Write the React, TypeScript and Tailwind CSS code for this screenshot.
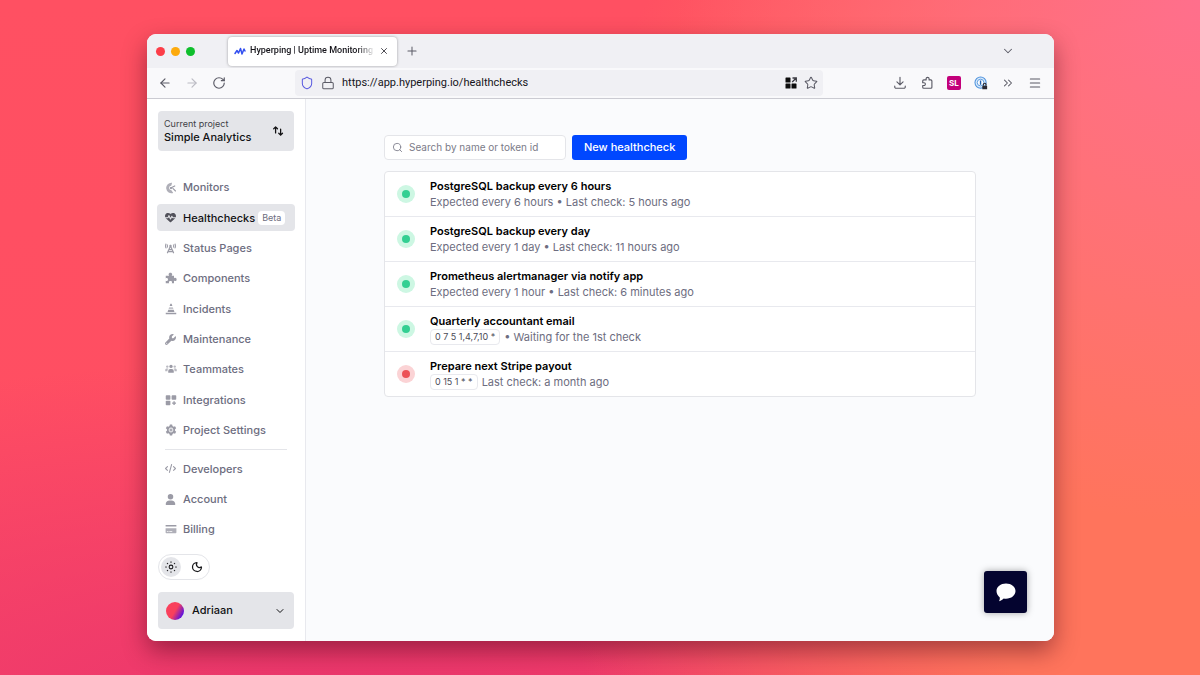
import type { ReactNode } from "react";
import {
  ArrowLeft,
  ArrowRight,
  ChevronDown,
  ChevronsRight,
  Lock,
  Menu,
  Moon,
  Plus,
  RotateCw,
  Search,
  Shield,
  Star,
  X,
} from "lucide-react";
import { FaCode, FaHeartPulse, FaTowerCell, FaUser, FaWrench } from "react-icons/fa6";

type NavItem = {
  label: string;
  icon: ReactNode;
  active?: boolean;
  badge?: string;
};

type Healthcheck = {
  name: string;
  cron?: string;
  detail: string;
  status: "up" | "down";
};

function RadarIcon() {
  return (
    <svg viewBox="0 0 16 16" className="size-3" fill="none">
      <path d="M9.500 1A7 7 0 1 0 11 14.500L8.600 11A3 3 0 0 1 8.300 5Z" fill="currentColor" opacity="0.8" />
      <path d="M7.500 8l5.500-2.800M10.500 8.500l3.500 3.500" stroke="currentColor" strokeWidth="1.500" strokeLinecap="round" />
      <circle cx="8" cy="8" r="1.500" fill="currentColor" />
    </svg>
  );
}

function PuzzleIcon() {
  return (
    <svg viewBox="0 0 16 16" className="size-3" fill="currentColor">
      <path d="M1 5h4.600C5 4.300 4.800 3.700 4.800 3.100 4.800 1.800 5.900 1 7.200 1s2.400.8 2.400 2.100c0 .6-.2 1.200-.8 1.900H12v3.400c.6-.5 1.100-.7 1.700-.7 1 0 1.800 1 1.800 2.200s-.8 2.200-1.800 2.200c-.6 0-1.100-.2-1.700-.7V15H8.900c.4-.5.5-.9.5-1.300 0-1-.9-1.700-2.100-1.700s-2.100.7-2.100 1.700c0 .4.100.8.5 1.300H1v-3.500c.5.4.9.5 1.300.5 1 0 1.700-.9 1.700-2s-.7-2-1.700-2c-.4 0-.8.100-1.300.5z" />
    </svg>
  );
}

function ConeIcon() {
  return (
    <svg viewBox="0 0 16 16" className="size-3" fill="currentColor">
      <path d="M7.200 1h1.600l1 3H6.200z" />
      <path d="M5.600 5.500h4.800l.8 2.500H4.800z" opacity="0.6" />
      <path d="M4.400 9h7.200l1 3H3.400z" />
      <path d="M1 13h14v2H1z" />
    </svg>
  );
}

function TeamIcon() {
  return (
    <svg viewBox="0 0 16 16" className="size-3" fill="currentColor">
      <circle cx="8" cy="4.500" r="2.200" />
      <circle cx="3" cy="4.800" r="1.600" opacity="0.7" />
      <circle cx="13" cy="4.800" r="1.600" opacity="0.7" />
      <path d="M4.300 13v-2.200A2.800 2.800 0 0 1 7 8h2a2.800 2.800 0 0 1 2.700 2.800V13z" />
      <path d="M.3 11V9.200C.3 8 1.300 7.300 2.200 7.300h2.300C3.600 8.200 3.300 9.500 3.300 11zM15.700 11V9.200c0-1.200-1-1.900-1.900-1.900h-2.300c.9.900 1.200 2.200 1.200 3.700z" opacity="0.7" />
    </svg>
  );
}

function IntegrationsIcon() {
  return (
    <svg viewBox="0 0 16 16" className="size-3" fill="currentColor">
      <rect x="1" y="1.500" width="6.200" height="6" rx="1" />
      <rect x="8.800" y="1.500" width="6.200" height="6" rx="1" />
      <rect x="1" y="9" width="6.200" height="6" rx="1" />
      <path d="M11.200 9.500h1.800v1.700h1.700V13H13v1.700h-1.800V13H9.500v-1.800h1.700z" />
    </svg>
  );
}

function GearIcon() {
  return (
    <svg viewBox="0 0 16 16" className="size-3" fill="currentColor">
      <path
        d="M6.500.8h3l.5 2 1.400.8 2-.6 1.500 2.600-1.500 1.500v1.800l1.500 1.500-1.500 2.600-2-.6-1.400.8-.5 2h-3l-.5-2-1.400-.8-2 .6-1.500-2.600 1.500-1.500V7.100L1.100 5.600 2.600 3l2 .6 1.400-.8zM8 4.800a3.200 3.200 0 1 0 0 6.400 3.200 3.200 0 0 0 0-6.400z"
        fillRule="evenodd"
      />
      <circle cx="8" cy="8" r="3.200" opacity="0.35" />
      <circle cx="8" cy="8" r="1.300" />
    </svg>
  );
}

function CardIcon() {
  return (
    <svg viewBox="0 0 16 16" className="size-3" fill="currentColor">
      <path d="M1.500 2.500h13c.4 0 .7.3.7.7v1.300H.8V3.200c0-.4.300-.7.700-.7z" />
      <path d="M.8 7h14.400v5.800c0 .5-.4.900-.9.900H1.700c-.5 0-.9-.4-.9-.9zM2.500 10.500v1.300h2.200v-1.300zm3.200 0v1.300h4v-1.300z" fillRule="evenodd" opacity="0.8" />
    </svg>
  );
}

function SunIcon() {
  return (
    <svg viewBox="0 0 16 16" className="size-3" fill="none" stroke="currentColor" strokeWidth="1.400" strokeLinecap="round">
      <circle cx="8" cy="8" r="2.500" />
      <path d="M8 .9v.9M8 14.200v.9M.9 8h.9M14.200 8h.9M3 3l.6.6M12.400 12.400l.6.6M3 13l.6-.6M12.400 3.600l.6-.6" />
    </svg>
  );
}

function ChatIcon() {
  return (
    <svg viewBox="0 0 20 20" className="size-5" fill="currentColor">
      <path d="M10 1.500c5.300 0 9.500 3.300 9.500 7.600s-4.200 7.700-9.500 7.700c-.8 0-1.600-.1-2.300-.2-.9 1.100-2.600 2.200-4.700 2.600.6-1 .9-2.400.8-3.800C1.700 13.900.500 11.700.500 9.100c0-4.300 4.200-7.600 9.500-7.600z" />
    </svg>
  );
}

function HyperpingLogo() {
  return (
    <svg viewBox="0 0 24 16" className="h-2.5 w-3 shrink-0" fill="none" stroke="#3350f0" strokeWidth="3" strokeLinejoin="round" strokeLinecap="round">
      <path d="M2 13l4-6 3 5 4-9 3 11 4-10 2 4" />
    </svg>
  );
}

function AppsIcon() {
  return (
    <svg viewBox="0 0 12 12" className="size-3 shrink-0" fill="#0c0c0d">
      <rect x="0.500" y="0.500" width="5" height="5" rx="0.600" />
      <rect x="0.500" y="6.500" width="5" height="5" rx="0.600" />
      <rect x="6.500" y="6.500" width="5" height="5" rx="0.600" />
      <path d="M7.500 1H11.300v3.800M11 1.300L7.200 5" fill="none" stroke="#3a3a42" strokeWidth="1.300" />
    </svg>
  );
}

function DownloadIcon() {
  return (
    <svg viewBox="0 0 16 16" className="size-3.5" fill="none" stroke="currentColor" strokeWidth="1.300" strokeLinecap="round" strokeLinejoin="round">
      <path d="M8 1.500v8.500M4.500 6.800L8 10.200l3.500-3.400M2 11.500v1A1.500 1.500 0 0 0 3.500 14h9a1.500 1.500 0 0 0 1.500-1.500v-1" />
    </svg>
  );
}

function ExtensionIcon() {
  return (
    <svg viewBox="0 0 16 16" className="size-3.5" fill="none" stroke="currentColor" strokeWidth="1.300" strokeLinejoin="round">
      <path d="M7 4.500V3.200a1.700 1.700 0 0 1 3.400 0v1.300h2c.7 0 1.200.5 1.200 1.200v7.100c0 .7-.5 1.200-1.200 1.200H4.300c-.7 0-1.200-.5-1.200-1.200v-2h1.500a1.500 1.500 0 0 0 0-3.100H3.100v-2c0-.7.500-1.200 1.200-1.200z" />
    </svg>
  );
}

function PasswordIcon() {
  return (
    <svg viewBox="0 0 16 16" className="size-3.5" fill="none">
      <circle cx="7.500" cy="7.500" r="6.400" fill="#d6e8fa" stroke="#4f93dd" strokeWidth="1.200" />
      <circle cx="7.500" cy="7.500" r="3.800" fill="#fff" stroke="#4f93dd" strokeWidth="1" />
      <path d="M7.500 5v5" stroke="#1f5fae" strokeWidth="1.600" />
      <path d="M9.500 11h5.500v4H9.500z" fill="#2b2a33" />
      <path d="M10.800 11V9.800a1.500 1.500 0 0 1 3 0V11" stroke="#2b2a33" strokeWidth="1.200" />
    </svg>
  );
}

function SwapIcon() {
  return (
    <svg viewBox="0 0 16 16" className="size-3" fill="none" stroke="currentColor" strokeWidth="1.700" strokeLinecap="round" strokeLinejoin="round">
      <path d="M4.800 10.500V2.500M2.300 5l2.500-2.500L7.300 5M11.500 5.500v8M9 11l2.500 2.500L14 11" />
    </svg>
  );
}

const mainNav: NavItem[] = [
  { label: "Monitors", icon: <RadarIcon /> },
  { label: "Healthchecks", icon: <FaHeartPulse />, active: true, badge: "Beta" },
  { label: "Status Pages", icon: <FaTowerCell /> },
  { label: "Components", icon: <PuzzleIcon /> },
  { label: "Incidents", icon: <ConeIcon /> },
  { label: "Maintenance", icon: <FaWrench /> },
  { label: "Teammates", icon: <TeamIcon /> },
  { label: "Integrations", icon: <IntegrationsIcon /> },
  { label: "Project Settings", icon: <GearIcon /> },
];

const accountNav: NavItem[] = [
  { label: "Developers", icon: <FaCode /> },
  { label: "Account", icon: <FaUser /> },
  { label: "Billing", icon: <CardIcon /> },
];

const healthchecks: Healthcheck[] = [
  {
    name: "PostgreSQL backup every 6 hours",
    detail: "Expected every 6 hours • Last check: 5 hours ago",
    status: "up",
  },
  {
    name: "PostgreSQL backup every day",
    detail: "Expected every 1 day • Last check: 11 hours ago",
    status: "up",
  },
  {
    name: "Prometheus alertmanager via notify app",
    detail: "Expected every 1 hour • Last check: 6 minutes ago",
    status: "up",
  },
  {
    name: "Quarterly accountant email",
    cron: "0 7 5 1,4,7,10 *",
    detail: "• Waiting for the 1st check",
    status: "up",
  },
  {
    name: "Prepare next Stripe payout",
    cron: "0 15 1 * *",
    detail: "Last check: a month ago",
    status: "down",
  },
];

function TabBar() {
  return (
    <div className="flex h-[34px] items-center bg-[#f0f0f4] pl-[9px] pr-[39px]">
      <div className="flex w-[72px] shrink-0 gap-1.5">
        <span className="size-[9px] rounded-full bg-[#fc3d48]" />
        <span className="size-[9px] rounded-full bg-[#fdaa0c]" />
        <span className="size-[9px] rounded-full bg-[#0fbf2c]" />
      </div>
      <div className="flex h-[29px] w-[169px] items-center gap-1 rounded bg-white pl-1.5 pr-2 shadow-[0_0_3px_rgba(0,0,0,0.35)]">
        <HyperpingLogo />
        <span className="min-w-0 flex-1 overflow-hidden whitespace-nowrap font-['Roboto',sans-serif] text-[9px] font-medium text-[#15141a] mask-r-from-85%">
          Hyperping | Uptime Monitoring a
        </span>
        <button aria-label="Close tab" className="shrink-0 text-[#2b2a33]">
          <X className="size-2.5" strokeWidth={2} />
        </button>
      </div>
      <button aria-label="New tab" className="ml-2 text-[#5b5b66]">
        <Plus className="size-3.5" strokeWidth={1.75} />
      </button>
      <button aria-label="List all tabs" className="ml-auto text-[#5b5b66]">
        <ChevronDown className="size-3.5" strokeWidth={1.75} />
      </button>
    </div>
  );
}

function Toolbar() {
  return (
    <div className="flex h-[31px] items-center border-b border-[#cbcbd2] bg-[#f9f9fb] text-[#5b5b66]">
      <div className="flex w-[148px] shrink-0 items-center gap-[13px] pl-[11px]">
        <button aria-label="Back">
          <ArrowLeft className="size-3.5" strokeWidth={2} />
        </button>
        <button aria-label="Forward" className="text-[#bcbcc4]">
          <ArrowRight className="size-3.5" strokeWidth={2} />
        </button>
        <button aria-label="Reload">
          <RotateCw className="size-3.5" strokeWidth={2} />
        </button>
      </div>
      <div className="flex h-[26px] min-w-0 flex-1 items-center gap-[7px] rounded bg-[#f0f0f4] px-[5px]">
        <Shield className="size-3.5 shrink-0 text-[#5a5be0]" strokeWidth={1.75} />
        <Lock className="size-3.5 shrink-0" strokeWidth={1.75} />
        <input
          aria-label="Address"
          defaultValue="https://app.hyperping.io/healthchecks"
          className="min-w-0 flex-1 bg-transparent font-['Roboto',sans-serif] text-[11px] text-[#15141a] outline-none"
        />
        <AppsIcon />
        <Star className="size-3.5 shrink-0" strokeWidth={1.75} />
      </div>
      <div className="flex w-[231px] shrink-0 items-center justify-end gap-[13px] pr-3">
        <button aria-label="Downloads">
          <DownloadIcon />
        </button>
        <button aria-label="Extensions">
          <ExtensionIcon />
        </button>
        <span className="flex size-3.5 items-center justify-center rounded-xs bg-[#c3007a] text-[8px] font-bold text-white">
          SL
        </span>
        <PasswordIcon />
        <button aria-label="More tools">
          <ChevronsRight className="size-3.5" strokeWidth={1.75} />
        </button>
        <button aria-label="Open menu">
          <Menu className="size-3.5" strokeWidth={1.75} />
        </button>
      </div>
    </div>
  );
}

function NavLink({ item }: { item: NavItem }) {
  return (
    <a
      href="#"
      className={
        item.active
          ? "flex h-[27px] items-center rounded bg-[#e4e5e9] px-2 text-[11px] font-medium text-[#111113]"
          : "flex h-[27px] items-center rounded px-2 text-[11px] font-medium text-[#6d6d80]"
      }
    >
      <span
        className={
          item.active
            ? "flex w-[18px] shrink-0 text-[11px] text-[#52525b]"
            : "flex w-[18px] shrink-0 text-[11px] text-[#9b9ba6]"
        }
      >
        {item.icon}
      </span>
      {item.label}
      {item.badge && (
        <span className="ml-[3px] rounded bg-white px-1 text-[9px] leading-3.5 font-normal text-[#6d6d80]">
          {item.badge}
        </span>
      )}
    </a>
  );
}

function Sidebar() {
  return (
    <aside className="flex w-[159px] shrink-0 flex-col border-r border-[#e8e9ee] bg-white px-[11px] pt-3 pb-3">
      <button className="flex h-10 items-center justify-between rounded bg-[#e4e5e9] pl-1.5 pr-2.5 text-left text-[#111113]">
        <span className="flex flex-col">
          <span className="text-[9px] leading-3 text-[#3f3f46]">Current project</span>
          <span className="text-[11px] leading-3.5 font-medium">Simple Analytics</span>
        </span>
        <SwapIcon />
      </button>

      <nav className="-mx-px mt-[23px] mb-[11px] flex flex-1 flex-col justify-between">
        {mainNav.map((item) => (
          <NavLink key={item.label} item={item} />
        ))}
        <hr className="mx-2 my-0.5 border-[#e4e5e9]" />
        {accountNav.map((item) => (
          <NavLink key={item.label} item={item} />
        ))}
      </nav>

      <div className="flex h-[26px] items-center gap-1.5 self-start rounded-full border border-[#e4e5e9] px-0.5 text-[#18181b]">
        <button aria-label="Light theme" className="flex size-5 items-center justify-center rounded-full bg-[#e4e5e9]">
          <SunIcon />
        </button>
        <button aria-label="Dark theme" className="flex size-5 items-center justify-center rounded-full">
          <Moon className="size-3" strokeWidth={2.5} />
        </button>
      </div>

      <button className="mt-3 flex h-[37px] items-center gap-2 rounded bg-[#e4e5e9] px-2 text-[11px] font-medium text-[#111113]">
        <span className="size-[18px] rounded-full bg-[linear-gradient(120deg,#f9405c_0%,#f9405c_50%,#5b10e0_85%)]" />
        Adriaan
        <ChevronDown className="ml-auto size-3" strokeWidth={2} />
      </button>
    </aside>
  );
}

function HealthcheckRow({ check }: { check: Healthcheck }) {
  return (
    <li className="flex h-[45px] items-center gap-[15px] border-b border-[#e8e9ee] px-3 last:h-11 last:border-b-0">
      <span
        className={
          check.status === "up"
            ? "flex size-[18px] shrink-0 items-center justify-center rounded-full bg-[#cdf7e3]"
            : "flex size-[18px] shrink-0 items-center justify-center rounded-full bg-[#fbd3d5]"
        }
      >
        <span
          className={
            check.status === "up"
              ? "size-2 rounded-full bg-[#33cf92]"
              : "size-2 rounded-full bg-[#ec5257]"
          }
        />
      </span>
      <div className="min-w-0">
        <h2 className="text-[11px] leading-4 font-semibold text-black">{check.name}</h2>
        <p className="flex items-center gap-1 text-[11px] leading-4 text-[#6d6d80]">
          {check.cron && (
            <code className="rounded border border-[#e8e9ee] px-1 font-['Inter',sans-serif] text-[9px] leading-3.5 text-[#4b4b57]">
              {check.cron}
            </code>
          )}
          {check.detail}
        </p>
      </div>
    </li>
  );
}

export default function App() {
  return (
    <div className="flex min-h-screen bg-[radial-gradient(circle_at_100%_0%,#ff6f8c_0%,rgba(255,111,140,0)_38%),radial-gradient(ellipse_55%_110%_at_100%_60%,#ff745c_0%,#ff745c_45%,rgba(255,116,92,0)_100%),radial-gradient(ellipse_90%_55%_at_30%_108%,#e9336e_0%,rgba(233,51,110,0)_100%),linear-gradient(#ff5062,#ff4d62)] pt-[34px] pr-[146px] pb-[34px] pl-[147px] font-['Inter',sans-serif]">
      <div className="relative flex min-w-0 flex-1 flex-col overflow-hidden rounded-[9px] bg-white shadow-[0_10px_24px_rgba(60,0,20,0.45)]">
        <TabBar />
        <Toolbar />
        <div className="flex flex-1">
          <Sidebar />
          <main className="min-w-0 flex-1 bg-[#fafbfd] px-[78px] pt-9">
            <div className="flex gap-1.5">
              <label className="flex h-[25px] w-[182px] items-center gap-1.5 rounded border border-[#e4e5e9] bg-white px-[7px] text-[#82828f]">
                <Search className="size-[11px] shrink-0" strokeWidth={2} />
                <input
                  type="search"
                  aria-label="Search healthchecks"
                  placeholder="Search by name or token id"
                  className="min-w-0 flex-1 text-[10px] outline-none placeholder:text-[#7b7b88]"
                />
              </label>
              <button className="h-[25px] rounded-[3px] bg-[#0047ff] px-3 text-[11px] font-medium text-white">
                New healthcheck
              </button>
            </div>
            <ul className="mt-[11px] rounded border border-[#e4e5e9] bg-white">
              {healthchecks.map((check) => (
                <HealthcheckRow key={check.name} check={check} />
              ))}
            </ul>
          </main>
        </div>
        <button
          aria-label="Open chat"
          className="absolute right-[27px] bottom-7 flex h-[42px] w-[43px] items-center justify-center rounded-[3px] bg-[#04042f] text-white shadow-[0_0_7px_rgba(0,0,0,0.35)]"
        >
          <ChatIcon />
        </button>
      </div>
    </div>
  );
}
